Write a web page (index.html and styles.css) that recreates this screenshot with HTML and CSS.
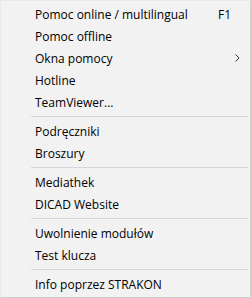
FILE: index.html
```html
<!DOCTYPE html>
<html>
<head>
<meta charset="utf-8">
<link rel="stylesheet" href="styles.css">
</head>
<body>
<div class="menu">
  <div class="item"><span class="label">Pomoc online / multilingual</span><span class="key">F1</span></div>
  <div class="item"><span class="label">Pomoc offline</span></div>
  <div class="item"><span class="label">Okna pomocy</span><span class="arrow"><svg width="5" height="8" viewBox="0 0 5 8"><path d="M0.5 0.5 L4 4 L0.5 7.5" fill="none" stroke="#333" stroke-width="1"/></svg></span></div>
  <div class="item"><span class="label">Hotline</span></div>
  <div class="item"><span class="label">TeamViewer...</span></div>
  <div class="sep"></div>
  <div class="item"><span class="label">Podręczniki</span></div>
  <div class="item"><span class="label">Broszury</span></div>
  <div class="sep"></div>
  <div class="item"><span class="label">Mediathek</span></div>
  <div class="item"><span class="label">DICAD Website</span></div>
  <div class="sep"></div>
  <div class="item"><span class="label">Uwolnienie modułów</span></div>
  <div class="item"><span class="label">Test klucza</span></div>
  <div class="sep"></div>
  <div class="item"><span class="label">Info poprzez STRAKON</span></div>
</div>
</body>
</html>
```
FILE: styles.css
```css
html, body {
  margin: 0;
  padding: 0;
  background: #f2f2f2;
}
.menu {
  width: 251px;
  height: 298px;
  box-sizing: border-box;
  background: #f2f2f2;
  border: 1px solid #cccccc;
  border-top-color: #e8e8e8;
  border-left-color: #e8e8e8;
  padding: 2px 2px 2px 0;
  font-family: "Open Sans", "Noto Sans", sans-serif;
  font-size: 12px;
  color: #000;
}
.item {
  display: flex;
  align-items: center;
  height: 22px;
  position: relative;
}
.label {
  padding-left: 34px;
  flex: 1;
  white-space: nowrap;
}
.key {
  width: 30px;
  margin-right: 0;
}
.arrow {
  position: absolute;
  left: 234px;
  top: 7px;
  line-height: 0;
}
.sep {
  height: 7px;
  display: flex;
  align-items: center;
  padding-left: 30px;
}
.sep::after {
  content: "";
  display: block;
  flex: 1;
  height: 1px;
  background: #d7d7d7;
}
```
